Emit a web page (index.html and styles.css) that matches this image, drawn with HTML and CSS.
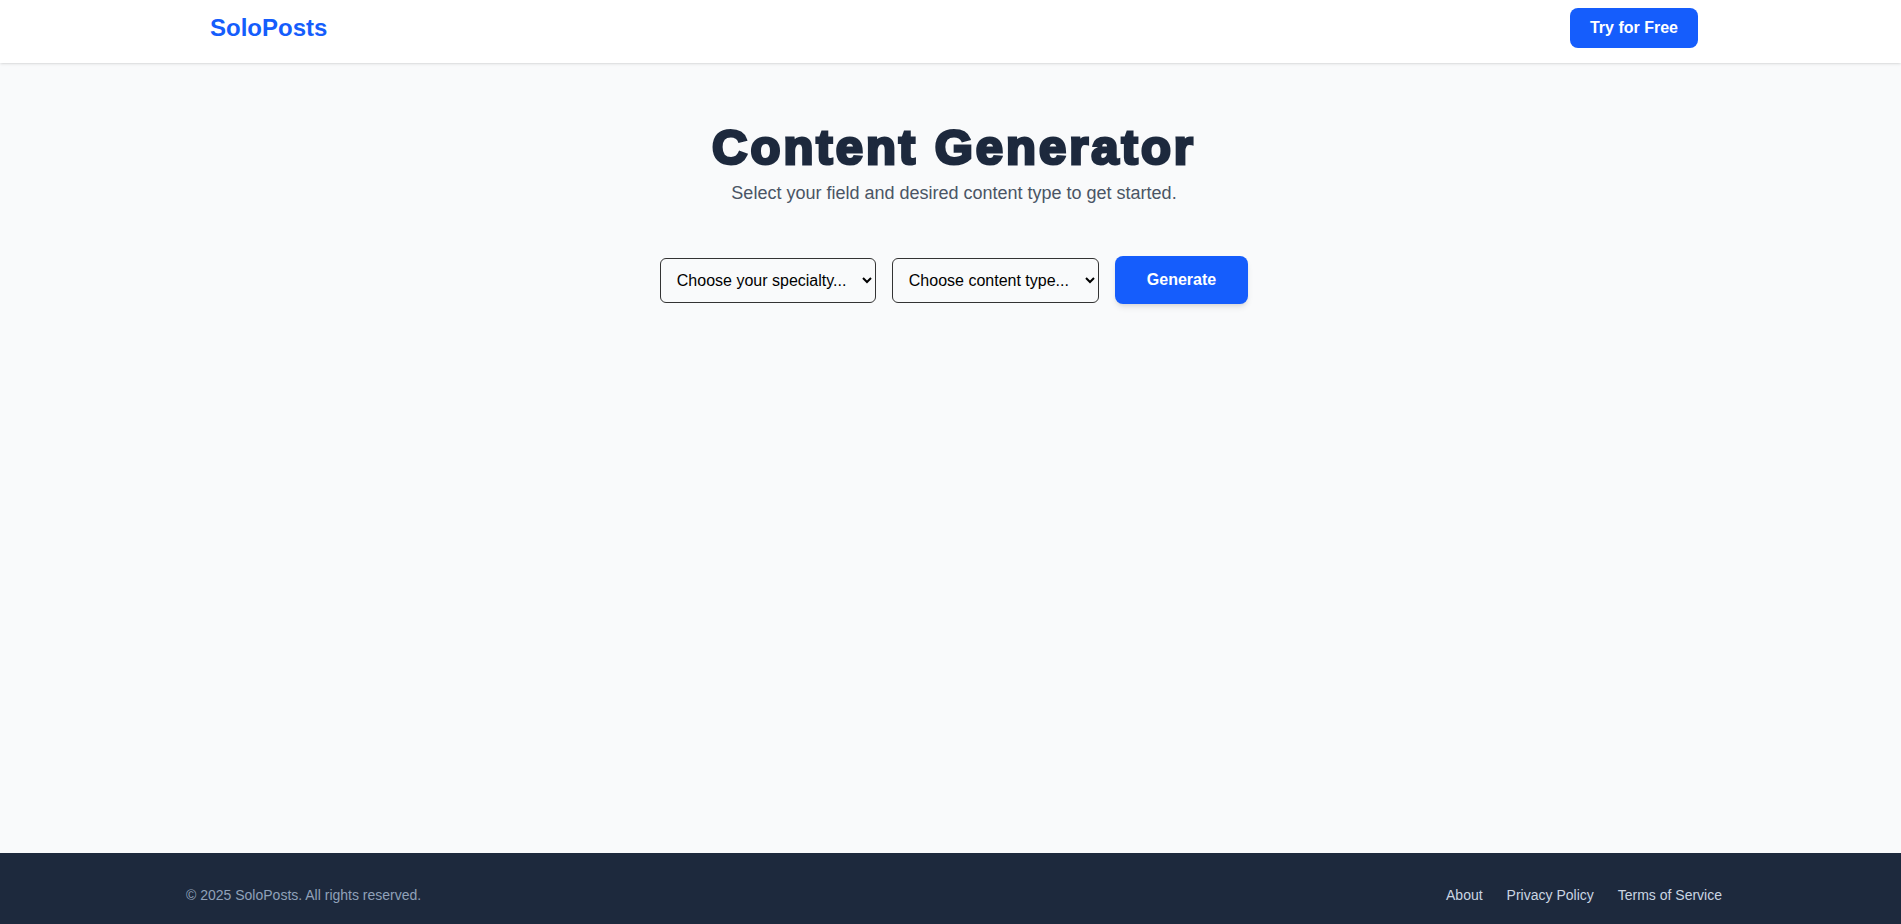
FILE: index.html
```html
<!DOCTYPE html>
<html lang="en">
<head>
    <meta charset="UTF-8">
    <meta name="viewport" content="width=device-width, initial-scale=1.0">
    <title>SoloPosts - Content Generator</title>
    <link rel="stylesheet" href="styles.css">
</head>
<body>
    <!-- En-tête -->
    <header class="site-header">
        <div class="header-inner">
            <a href="#" class="logo">SoloPosts</a>
            <a href="#" class="btn btn-primary">Try for Free</a>
        </div>
    </header>

    <main class="main">
        <h1 class="title">Content Generator</h1>
        <p class="subtitle">Select your field and desired content type to get started.</p>

        <form class="controls" onsubmit="return false;">
            <select id="specialty-select">
                <option value="">Choose your specialty...</option>
                <option value="coach">Coach</option>
                <option value="designer">Designer</option>
                <option value="consultant">Consultant</option>
            </select>
            <select id="type-select">
                <option value="">Choose content type...</option>
                <option value="post">Post</option>
                <option value="thread">Thread</option>
                <option value="email">Email</option>
            </select>
            <button type="submit" class="btn btn-generate">Generate</button>
        </form>
    </main>

    <footer class="site-footer">
        <div class="footer-inner">
            <p class="copyright">&copy; 2025 SoloPosts. All rights reserved.</p>
            <nav class="footer-links">
                <a href="#">About</a>
                <a href="#">Privacy Policy</a>
                <a href="#">Terms of Service</a>
            </nav>
        </div>
    </footer>
</body>
</html>
```

FILE: styles.css
```css
* {
    box-sizing: border-box;
}

html, body {
    margin: 0;
    padding: 0;
}

body {
    font-family: "Liberation Sans", Arial, sans-serif;
    background-color: #f9fafb;
    color: #1d293d;
    min-height: 100vh;
    display: flex;
    flex-direction: column;
}

/* En-tête */
.site-header {
    background-color: #fff;
    padding-left: 7px;
    box-shadow: 0 1px 3px rgba(0, 0, 0, 0.1), 0 1px 2px -1px rgba(0, 0, 0, 0.1);
    position: relative;
    z-index: 1;
}

.header-inner {
    max-width: 1536px;
    margin: 0 auto;
    padding: 8px 24px 15px;
    display: flex;
    justify-content: space-between;
    align-items: center;
}

.logo {
    font-size: 24px;
    line-height: 32px;
    font-weight: bold;
    color: #155dfc;
    text-decoration: none;
}

.btn {
    display: inline-block;
    font-family: inherit;
    font-size: 16px;
    line-height: 24px;
    font-weight: bold;
    color: #fff;
    background-color: #155dfc;
    border: none;
    border-radius: 8px;
    text-decoration: none;
    cursor: pointer;
}

.btn-primary {
    padding: 8px 20px;
}

/* Contenu principal */
.main {
    flex: 1;
    padding: 60px 0 0 7px;
    text-align: center;
}

.title {
    margin: 0;
    font-size: 49px;
    line-height: 48px;
    font-weight: bold;
    color: #1d293d;
    letter-spacing: 3px;
    -webkit-text-stroke: 3px #1d293d;
}

.subtitle {
    margin: 8px 0 0;
    font-size: 18px;
    line-height: 28px;
    color: #4a5565;
}

.controls {
    margin-top: 49px;
    display: flex;
    justify-content: center;
    align-items: center;
    gap: 16px;
}

.controls select {
    font-family: inherit;
    font-size: 16px;
    color: #000;
    background-color: transparent;
    padding: 12px;
    border: 1px solid #333;
    border-radius: 6px;
}

.btn-generate {
    padding: 12px 32px;
    box-shadow: 0 4px 6px -1px rgba(0, 0, 0, 0.1), 0 2px 4px -2px rgba(0, 0, 0, 0.1);
}

/* Pied de page */
.site-footer {
    background-color: #1d293d;
    padding-left: 7px;
}

.footer-inner {
    max-width: 1536px;
    margin: 0 auto;
    padding: 32px 0 19px;
    display: flex;
    justify-content: space-between;
    align-items: center;
    font-size: 14px;
    line-height: 20px;
}

.copyright {
    margin: 0;
    color: #90a1b9;
}

.footer-links {
    display: flex;
    gap: 24px;
}

.footer-links a {
    color: #cad5e2;
    text-decoration: none;
}
```
